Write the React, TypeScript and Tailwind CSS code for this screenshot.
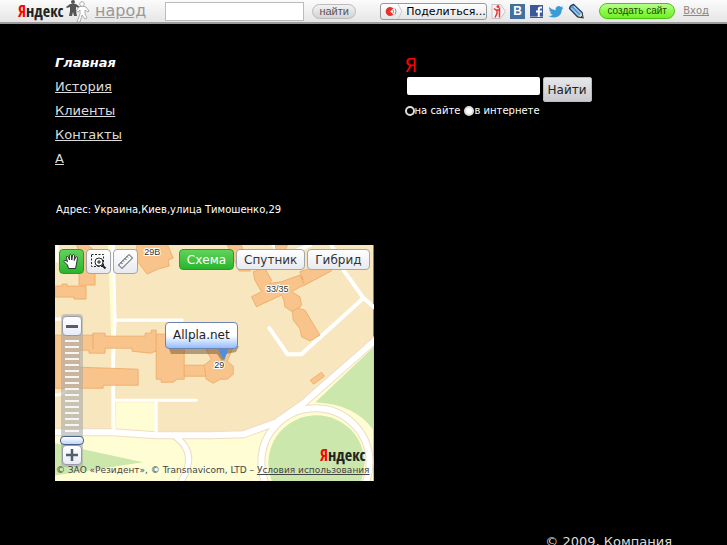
import { useState } from "react";
import clsx from "clsx";

const menu = ["История", "Клиенты", "Контакты", "А"];
const mapTypes = ["Схема", "Спутник", "Гибрид"];

function YandexLogo({ className }: { className?: string }) {
  return (
    <span
      className={clsx(
        "font-['Open_Sans_Condensed','DejaVu_Sans_Condensed',sans-serif] text-[16px] leading-none text-[#222]",
        className,
      )}
    >
      <span className="text-[#f00]">Я</span>ндекс
    </span>
  );
}

function PeopleIcon() {
  return (
    <svg width="24" height="23" viewBox="0 0 24 23" aria-hidden="true">
      <g fill="#555">
        <circle cx="7" cy="2" r="2" />
        <path d="M4 4h6l4 3-1 1-3-1v4l1 5H8l-1-4-1 4H3l1-5V7L1 8 0 7z" />
      </g>
      <g fill="#fff" stroke="#999" strokeWidth="0.8">
        <path d="M13 7l3-1 4 1 3 4-1 1-3-2v4l2 4-2 1-3-4-2 7h-3l3-8v-4l-2 2-2-1z" />
        <circle cx="16" cy="4" r="2.3" />
      </g>
    </svg>
  );
}

function ShareLinks() {
  return (
    <div className="ml-1 flex items-center gap-1">
      <a href="#ya" aria-label="Я.ру">
        <svg width="15" height="15" viewBox="0 0 15 15">
          <path d="M1 .5h8.500l5 7-5 7H1z" fill="#f4f4f4" stroke="#c4c4c4" />
          <circle cx="7" cy="2.500" r="1.500" fill="#e33" />
          <path
            d="M3 4.500l2 1.500h3M8.500 3.500v10M6 6v3.500L4 13.500"
            stroke="#e33"
            strokeWidth="1.500"
            fill="none"
          />
        </svg>
      </a>
      <a
        href="#vk"
        aria-label="ВКонтакте"
        className="flex h-[15px] w-[15px] items-center justify-center bg-[#4470a0] font-['Liberation_Sans'] text-[12px] font-bold leading-none text-white"
      >
        B
      </a>
      <a href="#fb" aria-label="Facebook">
        <svg width="15" height="15" viewBox="0 0 15 15">
          <path d="M1 1h13v13H1z" fill="#3b5998" />
          <path d="M1 12h13v1H1z" fill="#8496bf" />
          <path
            d="M13 3.500h-1.500q-1.700 0-1.700 1.800V13M7 7.500h6"
            stroke="#fff"
            strokeWidth="2"
            fill="none"
          />
        </svg>
      </a>
      <a href="#tw" aria-label="Twitter">
        <svg width="16" height="15" viewBox="0 0 16 15">
          <path
            d="M1 3q3 3 6.500 3.300Q7.300 2.500 10.500 2q1.500 0 2.500 1l2-.8-1 2 1.500-.2-1.700 1.800Q13.500 13 6.500 13.500 3 13.500.5 12q3 0 4.300-1.300Q2.500 10.300 2 8.600h1.500Q1.300 7.500 1.200 5.600l1.300.3Q.5 5 1 3z"
            fill="#3a9bd9"
          />
        </svg>
      </a>
      <a href="#lj" aria-label="LiveJournal">
        <svg width="16" height="16" viewBox="0 0 17 17">
          <path
            d="M1.500 6Q2 2.500 6 1.500L15 10l1 5.800-5.800-1z"
            fill="#5b93c9"
            stroke="#1c3550"
            strokeWidth="1.200"
          />
          <path d="M3.500 5.500l8 8M6 3.500l8 8" stroke="#a6cdf0" strokeWidth="1.300" />
          <path d="M11 14l3.500-3.500 1 5z" fill="#f2d9a8" />
          <path d="M14.500 13.500l1.300 2.200-2.300-.5z" fill="#222" />
        </svg>
      </a>
    </div>
  );
}

function TopBar() {
  return (
    <header className="flex h-[24px] items-center border-b-2 border-[#9b9b9b] bg-linear-to-b from-[#fbfbfb] to-[#e6e6e6] px-[18px]">
      <a href="#yandex" className="flex w-12 items-center">
        <YandexLogo />
      </a>
      <PeopleIcon />
      <a
        href="#narod"
        className="ml-[5px] w-[70px] text-[16px] leading-none text-[#999] underline"
      >
        народ
      </a>
      <input
        type="text"
        aria-label="Поиск"
        className="h-[19px] min-w-0 flex-1 border border-[#bbb] bg-white px-1 text-[11px] text-black"
      />
      <button className="ml-2 h-[15px] w-[44px] rounded-full border border-[#bbb] bg-linear-to-b from-[#f2f2f2] to-[#d4d4d8] font-['Liberation_Sans'] text-[11px] leading-none text-[#555]">
        найти
      </button>
      <button className="ml-6 flex h-[17px] w-[107px] items-center rounded-[3px] border border-[#999] bg-linear-to-b from-white to-[#e4e4e4] text-[11px] leading-none whitespace-nowrap text-black">
        <svg width="25" height="15" viewBox="0 0 25 15" aria-hidden="true">
          <path d="M17 0l4 7.500-4 7.500" fill="none" stroke="#ccc" />
          <path
            d="M12.500 4.500A4.500 4.500 0 1 0 12.500 10.500L9 7.500z"
            fill="#e8322b"
          />
          <path
            d="M12 6q1 1.500 0 3M14 4.500q2 3 0 6"
            fill="none"
            stroke="#888"
          />
        </svg>
        Поделиться...
      </button>
      <ShareLinks />
      <button className="ml-[15px] h-[16px] w-[76px] rounded-full border border-[#4fc316] bg-linear-to-b from-[#b8ff8a] via-[#8bf94a] to-[#6ff01e] font-['Liberation_Sans'] text-[10px] leading-none whitespace-nowrap text-[#1d4a08]">
        создать сайт
      </button>
      <a
        href="#login"
        className="ml-2 text-[10px] leading-none text-[#888] underline"
      >
        Вход
      </a>
    </header>
  );
}

function MapDrawing() {
  return (
    <svg
      viewBox="0 0 318 236"
      preserveAspectRatio="xMinYMin slice"
      className="absolute inset-0 h-full w-full"
      aria-hidden="true"
    >
      <path d="M0 0h318v236H0z" fill="#f8e6bf" />
      {/* open ground */}
      <path
        d="M53 0h7v187h-4V90zM61 157h40v32H61zM0 187l58 0 43 3h54l33-1 33-12 27-19 70-61v139H0z"
        fill="#fffdd3"
      />
      <g fill="#cbe7ab">
        <path d="M0 198l88 19-88 13z" />
        <path d="M260 157l58-55v83q-18-26-58-28z" />
      </g>
      {/* roads */}
      <g
        fill="none"
        stroke="#f1dcc4"
        strokeLinecap="round"
        strokeLinejoin="round"
      >
        <path
          d="M-4 187h62l43 3h54l33-1 33-12 27-19 74-65"
          strokeWidth="8"
        />
        <circle cx="260" cy="217" r="54" strokeWidth="8" />
        <path d="M121 192q22 16 5 44" strokeWidth="7" />
      </g>
      <circle cx="261" cy="218" r="48" fill="#cbe7ab" />
      <g
        fill="none"
        stroke="#fff"
        strokeLinecap="round"
        strokeLinejoin="round"
      >
        <path
          d="M-4 187h62l43 3h54l33-1 33-12 27-19 74-65"
          strokeWidth="6"
        />
        <circle cx="260" cy="217" r="54" strokeWidth="6" />
        <path d="M121 192q22 16 5 44" strokeWidth="5" />
        <path
          d="M214 83l18 26h14l62-56 10 9M308 53l-20-28-12-25M218 0l5 6M230 10l25-10"
          strokeWidth="4"
        />
        <path
          d="M58 0l2 75-2 50 1 60M61 75h66M60 155h81M101 155v34"
          strokeWidth="3"
        />
        <path d="M2 0v16M0 74h10M0 150q20 0 16-40" strokeWidth="3" />
      </g>
      {/* houses */}
      <g fill="#f9c48b" stroke="#eaa963" strokeWidth="0.8">
        <path d="M21-1h10l9 7v34H24V6z" />
        <path d="M0 41h7v-2h5v2h19v13H19v-2H0z" />
        <path d="M82-1h30l6 14-5 2 1 6-11 3-11 5-7-9-5-8z" />
        <path d="M0 90h38v-2h12v3h40v-3h6v-3h5v4h28v45h-7l-4 3h-12v-3h-5v-28l-6 2-18-2v-3H50v5H34v-3H24v17l59 2v16H48v3H0z" />
        <path d="M101 89v18M38 88v16" />
        <path d="M129 120h22v11h-22z" />
        <path d="M148 99l6-3h18l5 8-5 12 6 5v8l-6 5h-7l-7 4-7-4-2-14 7-6z" />
        <path d="M172 0h14l9 26h-11zM220 0h12l-3 7h-8z" />
        <path d="M255 135l11-8 3 4-11 8z" />
      </g>
      <g transform="translate(154.500 -5) scale(.3333)">
        <path
          d="M130 95l35-10 20 35-5 10 35-5 55-20 10 15-10-25 88-30 7 27-80 43-13 5-27 15 25 15 5 25-10 10 20 5 45 75-30 17-25-12-5-25-20-25-2-25-23-15-3-20-7-15-75 35-15-30 30-15-20-35zM245 215l27-15M270 105l13 28"
          fill="#f9c48b"
          stroke="#eaa963"
          strokeWidth="2.500"
        />
      </g>
      <g
        className="font-['Liberation_Sans']"
        fontSize="9"
        fill="#333"
        stroke="#fff"
        strokeWidth="2"
        paintOrder="stroke"
        textAnchor="middle"
      >
        <text x="97" y="10">29В</text>
        <text x="222" y="47">33/35</text>
        <text x="164" y="123">29</text>
      </g>
    </svg>
  );
}

function MapTools() {
  const tool =
    "flex h-[25px] w-[25px] items-center justify-center rounded-[4px] border";
  return (
    <div className="flex gap-px">
      <button
        aria-label="Рука"
        className={clsx(
          tool,
          "border-[#2b9a2b] bg-linear-to-b from-[#5fd35a] to-[#27b52b]",
        )}
      >
        <svg width="17" height="17" viewBox="0 0 17 17">
          <path
            d="M5.500 15.500L4.500 12 1 8.500q0-1.700 2-1l1.500 1.300L3.300 4q.7-1.700 2 0L6.500 7 6.300 2q1-1.500 2 0L8.800 7l.8-5q1.200-1.300 2 .3L11.200 7.500l1.600-3.500q1.400-1 1.700.6L13.500 11l-1 4.500z"
            fill="#fff"
            stroke="#222"
            strokeWidth="0.900"
          />
        </svg>
      </button>
      <button
        aria-label="Увеличить область"
        className={clsx(
          tool,
          "ml-px border-[#a5a5ad] bg-linear-to-b from-white to-[#e8eaf0]",
        )}
      >
        <svg width="17" height="17" viewBox="0 0 17 17" fill="none" stroke="#222">
          <path d="M1.500 1.500h12v12h-12z" strokeDasharray="2 1.500" />
          <circle cx="9" cy="9" r="4" fill="#fff" />
          <path d="M7 9h4M9 7v4" />
          <path d="M12 12l3.500 3.500" strokeWidth="2" />
        </svg>
      </button>
      <button
        aria-label="Линейка"
        className={clsx(
          tool,
          "ml-px border-[#a5a5ad] bg-linear-to-b from-white to-[#e8eaf0]",
        )}
      >
        <svg width="17" height="17" viewBox="0 0 17 17" fill="none" stroke="#444">
          <path d="M1.500 12L12 1.500 15.500 5 5 15.500z" />
          <path d="M4 9.500l1.500 1.500M6 7.500L7 8.500M8 5.500L9.500 7M10 3.500l1 1" />
        </svg>
      </button>
    </div>
  );
}

function ZoomControl() {
  const [zoom, setZoom] = useState(0);
  const step =
    "flex h-5 w-5 items-center justify-center rounded-[4px] border border-[#9a9aa8] bg-linear-to-b from-white to-[#e8ecf6]";
  return (
    <div className="absolute top-[69px] left-[5px] flex w-6 flex-col items-center">
      <div className="absolute inset-y-0 left-px w-[22px] rounded-[4px] bg-[#a9aba9]/60" />
      <button
        aria-label="Отдалить"
        className={clsx(step, "relative mt-[2px]")}
        onClick={() => setZoom(Math.max(zoom - 1, 0))}
      >
        <span className="h-[3px] w-3 bg-[#555f6b]" />
      </button>
      <input
        type="range"
        aria-label="Масштаб"
        min={0}
        max={17}
        value={zoom}
        onChange={(e) => setZoom(Number(e.target.value))}
        className="relative h-[109px] w-6 appearance-none bg-[repeating-linear-gradient(to_bottom,transparent_0_4px,#f5f5f5_4px_6px)] bg-size-[14px_100px] bg-top bg-no-repeat [direction:rtl] [writing-mode:vertical-lr] [&::-webkit-slider-thumb]:h-[9px] [&::-webkit-slider-thumb]:w-6 [&::-webkit-slider-thumb]:appearance-none [&::-webkit-slider-thumb]:rounded-[4px] [&::-webkit-slider-thumb]:border [&::-webkit-slider-thumb]:border-[#4a6191] [&::-webkit-slider-thumb]:bg-linear-to-b [&::-webkit-slider-thumb]:from-white [&::-webkit-slider-thumb]:to-[#c3d5f5]"
      />
      <button
        aria-label="Приблизить"
        className={clsx(step, "relative mb-[2px]")}
        onClick={() => setZoom(Math.min(zoom + 1, 17))}
      >
        <svg width="12" height="12" viewBox="0 0 12 12">
          <path d="M6 0v12M0 6h12" stroke="#555f6b" strokeWidth="2.500" />
        </svg>
      </button>
    </div>
  );
}

function MapWidget() {
  const [mapType, setMapType] = useState("Схема");

  return (
    <section className="relative h-[236px] overflow-hidden">
      <MapDrawing />
      <div className="absolute inset-x-1 top-1 flex justify-between">
        <MapTools />
        <div className="flex gap-[2px]">
          {mapTypes.map((type) => (
            <button
              key={type}
              onClick={() => setMapType(type)}
              className={clsx(
                "h-[21px] rounded-[4px] border px-[7px] text-[12px] leading-none",
                type === mapType
                  ? "border-[#2b9a2b] bg-linear-to-b from-[#5fd35a] to-[#27b52b] text-white"
                  : "border-[#a5a5ad] bg-linear-to-b from-white to-[#e8eaf0] text-[#333]",
              )}
            >
              {type}
            </button>
          ))}
        </div>
      </div>
      <ZoomControl />
      <div className="absolute top-[77px] left-[110px]">
        <svg
          width="76"
          height="42"
          viewBox="0 0 76 42"
          className="absolute top-0 left-0"
          aria-hidden="true"
        >
          <path d="M3 24h71l-3 6-10 2-4 7-5-7H6z" fill="#6b5330" opacity="0.500" />
          <path d="M52 25h12l-5 14z" fill="#4f8fe0" />
        </svg>
        <div className="relative rounded-[4px] border border-[#6d83b3] bg-linear-to-b from-white via-white to-[#94bcfa] px-[7px] text-[12px] leading-[25px] text-[#222]">
          Allpla.net
        </div>
      </div>
      <YandexLogo className="absolute right-2 bottom-[18px]" />
      <p className="absolute right-1 bottom-1 text-[9px] leading-[14px] whitespace-nowrap text-[#444]">
        © ЗАО «Резидент», © Transnavicom, LTD –{" "}
        <a href="#terms" className="underline">
          Условия использования
        </a>
      </p>
    </section>
  );
}

function SiteSearch() {
  const radio =
    "h-[10px] w-[10px] appearance-none rounded-full border-2 border-[#ddd] bg-white checked:bg-black";
  return (
    <form onSubmit={(e) => e.preventDefault()}>
      <div className="h-[22px] font-['Liberation_Sans_Narrow','DejaVu_Sans_Condensed',sans-serif] text-[20px] leading-[20px] text-[#f00]">
        Я
      </div>
      <div className="flex items-start gap-[3px] pl-[2px]">
        <input
          type="text"
          aria-label="Запрос"
          className="h-[18px] w-[133px] rounded-[2px] bg-white px-1 text-[12px] text-black"
        />
        <button className="h-[25px] rounded-[2px] border border-[#bbb] bg-linear-to-b from-[#e6e7ea] to-[#c9cbd0] px-1 text-[12px] leading-none text-[#222]">
          Найти
        </button>
      </div>
      <div className="mt-[3px] flex gap-1 text-[10px] leading-[12px]">
        <label className="flex items-center">
          <input type="radio" name="where" defaultChecked className={radio} />
          на сайте
        </label>
        <label className="flex items-center">
          <input type="radio" name="where" className={radio} />
          в интернете
        </label>
      </div>
    </form>
  );
}

function App() {
  return (
    <div className="min-h-screen bg-black font-['DejaVu_Sans',sans-serif] text-white">
      <TopBar />
      <main className="grid grid-cols-[318fr_267fr] gap-[31px] px-[55px] pt-[27px]">
        <div>
          <nav>
            <ul className="text-[13px] leading-6">
              <li className="font-bold italic">Главная</li>
              {menu.map((item) => (
                <li key={item}>
                  <a href="#page" className="text-[#ddd] underline">
                    {item}
                  </a>
                </li>
              ))}
            </ul>
          </nav>
          <p className="mt-[31px] mb-[28px] pl-px text-[10px] leading-[15px]">
            Адрес: Украина,Киев,улица Тимошенко,29
          </p>
          <MapWidget />
        </div>
        <div className="pt-1">
          <SiteSearch />
        </div>
      </main>
      <footer className="px-[55px] pt-[52px] text-right text-[13px] leading-[18px] text-[#ddd]">
        © 2009, Компания
      </footer>
    </div>
  );
}

export default App;
